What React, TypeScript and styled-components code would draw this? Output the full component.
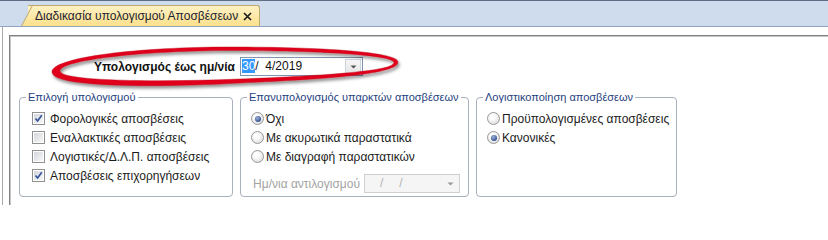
import React from "react";
import styled, { createGlobalStyle } from "styled-components";

const Global = createGlobalStyle`
  html, body { margin: 0; padding: 0; background: #ffffff; overflow: hidden; }
  body {
    width: 828px; height: 205px;
    font-family: "Liberation Sans", Arial, sans-serif;
    font-size: 12px; color: #1b1b1b;
  }
  * { box-sizing: border-box; }
`;

const Page = styled.div`
  position: relative;
  width: 828px;
  height: 205px;
  overflow: hidden;
`;

const TabStrip = styled.div`
  height: 27px;
  background: #cfdcee;
  border-top: 1px solid #5e6d83;
  border-bottom: 1px solid #91a4c2;
  padding: 4px 0 0 28px;
  display: flex;
  align-items: flex-end;
`;

const Tab = styled.div`
  position: relative;
  isolation: isolate;
  width: 232px;
  height: 21px;
  display: flex;
  align-items: center;
  justify-content: space-between;
  padding: 0 7px 0 7px;
  background: linear-gradient(#fff1c4, #fbe08b);
  border-top: 1px solid #bda96f;
  border-right: 1px solid #bda96f;
  border-top-right-radius: 3px;
  color: #1c2433;
  font-size: 12px;
  &::before {
    content: "";
    position: absolute;
    z-index: -1;
    left: -7px;
    top: -1px;
    bottom: 0;
    width: 16px;
    background: linear-gradient(#fff1c4, #fbe08b);
    border-top: 1px solid #bda96f;
    border-left: 1px solid #bda96f;
    transform-origin: bottom left;
    transform: skewX(-28deg);
  }
`;

const TabClose = styled.span`
  display: flex;
  align-items: center;
  padding-top: 1px;
`;

const Frame = styled.div`
  margin-left: 2px;
  border-left: 1px solid #a9a9a9;
  padding: 8px 0 0 6px;
  height: 178px;
`;

const Panel = styled.div`
  border-top: 1px solid #828282;
  border-left: 1px solid #828282;
  box-shadow: inset 1px 1px 0 #c6c6c6;
  height: 200px;
  padding-top: 21px;
`;

const DateRow = styled.div`
  display: flex;
  align-items: center;
  height: 19px;
`;

const DateLabel = styled.div`
  width: 225px;
  text-align: right;
  font-weight: bold;
  color: #111;
  margin-right: 5px;
`;

const DateBox = styled.div<{ $disabled?: boolean }>`
  display: flex;
  align-items: center;
  width: ${(p) => (p.$disabled ? 96 : 123)}px;
  height: 19px;
  border: 1px solid ${(p) => (p.$disabled ? "#cfcfcf" : "#8095b0")};
  background: ${(p) => (p.$disabled ? "#f5f5f5" : "#ffffff")};
  color: ${(p) => (p.$disabled ? "#b3b3b3" : "#111")};
  padding-left: 1px;
`;

const DateText = styled.div`
  flex: 1;
  white-space: pre;
  line-height: 15px;
`;

const Selected = styled.span`
  background: #3399ff;
  color: #fff;
`;

const Slash = styled.span<{ $gap: number }>`
  margin-left: ${(p) => p.$gap}px;
`;

const DropButton = styled.div<{ $flat?: boolean }>`
  width: 16px;
  height: 15px;
  margin-right: 1px;
  display: flex;
  align-items: center;
  justify-content: center;
  border: 1px solid ${(p) => (p.$flat ? "transparent" : "#cdd4dd")};
  background: ${(p) => (p.$flat ? "transparent" : "linear-gradient(#f6f6f6, #e6e6e6)")};
`;

const GroupRow = styled.div`
  display: flex;
  gap: 7px;
  padding-left: 9px;
  margin-top: 14px;
`;

const Group = styled.fieldset<{ $w: number }>`
  margin: 0;
  padding: 0;
  min-width: 0;
  width: ${(p) => p.$w}px;
  height: 107px;
  border: 1px solid #a8b0bd;
  border-radius: 4px;
`;

const Legend = styled.legend`
  margin-left: 6px;
  padding: 0 2px;
  line-height: 14px;
  font-size: 11px;
  color: #1f3f80;
  white-space: nowrap;
`;

const GroupBody = styled.div<{ $inset: number }>`
  padding: 5px 0 0 ${(p) => p.$inset}px;
`;

const Row = styled.div`
  display: flex;
  align-items: center;
  height: 19px;
  white-space: nowrap;
`;

const CheckBox = styled.span`
  width: 13px;
  height: 13px;
  margin-right: 5px;
  border: 1px solid #8e8f8f;
  background: #fff;
  padding: 1px;
  display: flex;
  flex-shrink: 0;
`;

const CheckInner = styled.span`
  flex: 1;
  display: flex;
  align-items: center;
  justify-content: center;
  background: linear-gradient(135deg, #d3d6dc, #f7f7f7);
`;

const Radio = styled.span<{ $on?: boolean }>`
  width: 13px;
  height: 13px;
  margin-right: 2px;
  border-radius: 50%;
  border: 1px solid #979797;
  background: radial-gradient(circle at 40% 35%, #ffffff 20%, #d4d4d4 100%);
  display: flex;
  align-items: center;
  justify-content: center;
  flex-shrink: 0;
  &::after {
    content: "";
    display: ${(p) => (p.$on ? "block" : "none")};
    width: 6px;
    height: 6px;
    border-radius: 50%;
    background: radial-gradient(circle at 40% 35%, #9fb3da, #2e4c8c 75%);
  }
`;

const SubRow = styled.div`
  display: flex;
  align-items: center;
  margin-top: 8px;
`;

const MutedLabel = styled.div`
  width: 109px;
  text-align: right;
  margin-right: 4px;
  color: #a3a3a3;
  white-space: nowrap;
`;

const Overlay = styled.svg`
  position: absolute;
  left: 0;
  top: 0;
  pointer-events: none;
`;

const Arrow = ({ color }: { color: string }) => (
  <svg width="7" height="4" viewBox="0 0 7 4">
    <polygon points="0.5,0.5 6.5,0.5 3.5,3.5" fill={color} />
  </svg>
);

const Check = () => (
  <svg width="9" height="9" viewBox="0 0 9 9">
    <path d="M1.5 4.5 L3.6 7 L7.8 1.3" fill="none" stroke="#34559a" strokeWidth="1.7" />
  </svg>
);

const CheckItem = ({ label, on }: { label: string; on?: boolean }) => (
  <Row>
    <CheckBox>
      <CheckInner>{on && <Check />}</CheckInner>
    </CheckBox>
    {label}
  </Row>
);

const RadioItem = ({ label, on }: { label: string; on?: boolean }) => (
  <Row>
    <Radio $on={on} />
    {label}
  </Row>
);

export default function App() {
  return (
    <Page>
      <Global />
      <TabStrip>
        <Tab>
          <span>Διαδικασία υπολογισμού Αποσβέσεων</span>
          <TabClose>
            <svg width="9" height="9" viewBox="0 0 9 9">
              <path d="M1 1 L8 8 M8 1 L1 8" stroke="#1e1e1e" strokeWidth="1.7" />
            </svg>
          </TabClose>
        </Tab>
      </TabStrip>
      <Frame>
        <Panel>
          <DateRow>
            <DateLabel>Υπολογισμός έως ημ/νία</DateLabel>
            <DateBox>
              <DateText>
                <Selected>30</Selected>/  4/2019
              </DateText>
              <DropButton>
                <Arrow color="#555" />
              </DropButton>
            </DateBox>
          </DateRow>
          <GroupRow>
            <Group $w={214}>
              <Legend>Επιλογή υπολογισμού</Legend>
              <GroupBody $inset={12}>
                <CheckItem label="Φορολογικές αποσβέσεις" on />
                <CheckItem label="Εναλλακτικές αποσβέσεις" />
                <CheckItem label="Λογιστικές/Δ.Λ.Π. αποσβέσεις" />
                <CheckItem label="Αποσβέσεις επιχορηγήσεων" on />
              </GroupBody>
            </Group>
            <Group $w={229}>
              <Legend>Επανυπολογισμός υπαρκτών αποσβέσεων</Legend>
              <GroupBody $inset={10}>
                <RadioItem label="Όχι" on />
                <RadioItem label="Με ακυρωτικά παραστατικά" />
                <RadioItem label="Με διαγραφή παραστατικών" />
                <SubRow>
                  <MutedLabel>Ημ/νια αντιλογισμού</MutedLabel>
                  <DateBox $disabled>
                    <DateText>
                      <Slash $gap={14}>/</Slash>
                      <Slash $gap={16}>/</Slash>
                    </DateText>
                    <DropButton $flat>
                      <Arrow color="#9a9a9a" />
                    </DropButton>
                  </DateBox>
                </SubRow>
              </GroupBody>
            </Group>
            <Group $w={201}>
              <Legend>Λογιστικοποίηση αποσβέσεων</Legend>
              <GroupBody $inset={10}>
                <RadioItem label="Προϋπολογισμένες αποσβέσεις" />
                <RadioItem label="Κανονικές" on />
              </GroupBody>
            </Group>
          </GroupRow>
        </Panel>
      </Frame>
      <Overlay width="828" height="205" viewBox="0 0 828 205">
        <defs>
          <filter id="redShadow" x="-10%" y="-50%" width="120%" height="200%">
            <feDropShadow dx="1.5" dy="2.5" stdDeviation="1.6" floodColor="#000" floodOpacity="0.45" />
          </filter>
        </defs>
        <path
          fillRule="evenodd"
          fill="#e1061d"
          stroke="#b80012"
          strokeWidth="0.4"
          filter="url(#redShadow)"
          d="M52,72 C52,57 140,47 230,47 C322,47 398,52 398,62 C398,74 330,79 240,83 C150,88 52,87 52,72 Z
             M60,71 C60,60 145,50.5 230,50.5 C318,50.5 394,55 394,62.5 C394,71 328,75.5 240,79 C152,82.5 60,81 60,71 Z"
        />
      </Overlay>
    </Page>
  );
}
